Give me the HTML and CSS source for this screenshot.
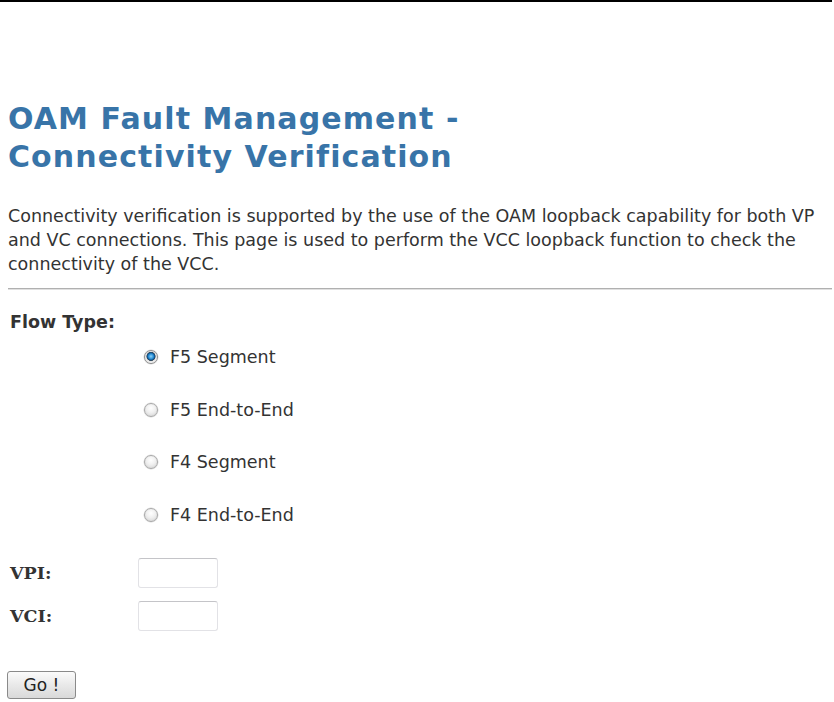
FILE: index.html
```html
<!DOCTYPE html>
<html>
<head>
<meta charset="utf-8">
<link rel="stylesheet" href="styles.css">
</head>
<body>
<div class="topline"></div>
<div class="page">
  <h1 class="title">OAM Fault Management -<br>Connectivity Verification</h1>
  <p class="intro">Connectivity verification is supported by the use of the OAM loopback capability for both VP and VC connections. This page is used to perform the VCC loopback function to check the connectivity of the VCC.</p>
  <hr class="rule">
  <div class="flow-label">Flow Type:</div>
  <div class="radios">
    <label class="radio-row"><input type="radio" name="flow" class="radio" checked><span>F5 Segment</span></label>
    <label class="radio-row"><input type="radio" name="flow" class="radio"><span>F5 End-to-End</span></label>
    <label class="radio-row"><input type="radio" name="flow" class="radio"><span>F4 Segment</span></label>
    <label class="radio-row"><input type="radio" name="flow" class="radio"><span>F4 End-to-End</span></label>
  </div>
  <div class="fields">
    <label class="field-label">VPI:</label><input class="field" type="text">
    <label class="field-label">VCI:</label><input class="field" type="text">
  </div>
  <button class="go">Go !</button>
</div>
</body>
</html>
```
FILE: styles.css
```css
html, body {
  margin: 0;
  padding: 0;
  background: #fff;
}
body {
  font-family: "DejaVu Sans", Verdana, sans-serif;
  color: #333;
  font-size: 17.5px;
}
.topline {
  width: 832px;
  height: 2px;
  background: #000;
}
.page {
  padding: 0 0 0 8px;
}
.title {
  margin: 98px 0 0 0;
  font-size: 30px;
  letter-spacing: 1.1px;
  line-height: 38px;
  font-weight: bold;
  color: #3874a8;
}
.intro {
  margin: 28px 0 0 0;
  line-height: 24px;
  font-size: 17.5px;
  color: #333;
  width: 826px;
}
.rule {
  margin: 12px 0 0 0;
  width: 824px;
  border: 0;
  height: 2px;
  background: #b0b0b0;
  border-bottom: 1px solid #e0e0e0;
  box-sizing: border-box;
}
.flow-label {
  margin: 21px 0 0 2px;
  font-weight: bold;
  color: #333;
  line-height: 22px;
}
.radios {
  display: flex;
  flex-direction: column;
  gap: 30.5px;
  margin: 13px 0 0 136px;
}
.radio-row {
  display: flex;
  align-items: center;
  gap: 12px;
  height: 22px;
  line-height: 22px;
}
.radio {
  appearance: none;
  -webkit-appearance: none;
  box-sizing: border-box;
  margin: 0;
  width: 14px;
  height: 14px;
  border-radius: 50%;
  border: 1px solid #a8a8a8;
  background: radial-gradient(circle at 50% 35%, #ffffff 0%, #f0f0f0 45%, #d0d0d0 100%);
  box-shadow: 0 0 0 0.5px #d8d8d8;
}
.radio:checked {
  border-color: #8c8c8c;
  background: radial-gradient(circle at 50% 45%, #8fd3f8 0%, #2a8fd6 28%, #0f4f86 42%, #3a4a58 48%, #e2e2e2 54%, #f6f6f6 70%, #c6c6c6 100%);
}
.fields {
  display: grid;
  grid-template-columns: 130px 80px;
  row-gap: 13px;
  align-items: center;
  margin: 32px 0 0 0;
}
.field-label {
  padding-left: 2px;
  font-family: "DejaVu Serif", "Liberation Serif", serif;
  font-weight: bold;
  color: #333;
  font-size: 17.5px;
}
.field {
  box-sizing: border-box;
  width: 80px;
  height: 30px;
  border: 1px solid #e2e2e6;
  border-top-color: #c4c4c8;
  border-radius: 3px;
  background: #fff;
  margin: 0;
}
.go {
  display: block;
  margin: 40px 0 0 -1px;
  width: 69px;
  height: 28px;
  font-family: "DejaVu Sans", Verdana, sans-serif;
  font-size: 17px;
  color: #222;
  border: 1px solid #8a8a8a;
  border-radius: 3px;
  background: linear-gradient(#fbfbfb, #e9e9e9 50%, #d9d9d9);
  padding: 0;
}
```
